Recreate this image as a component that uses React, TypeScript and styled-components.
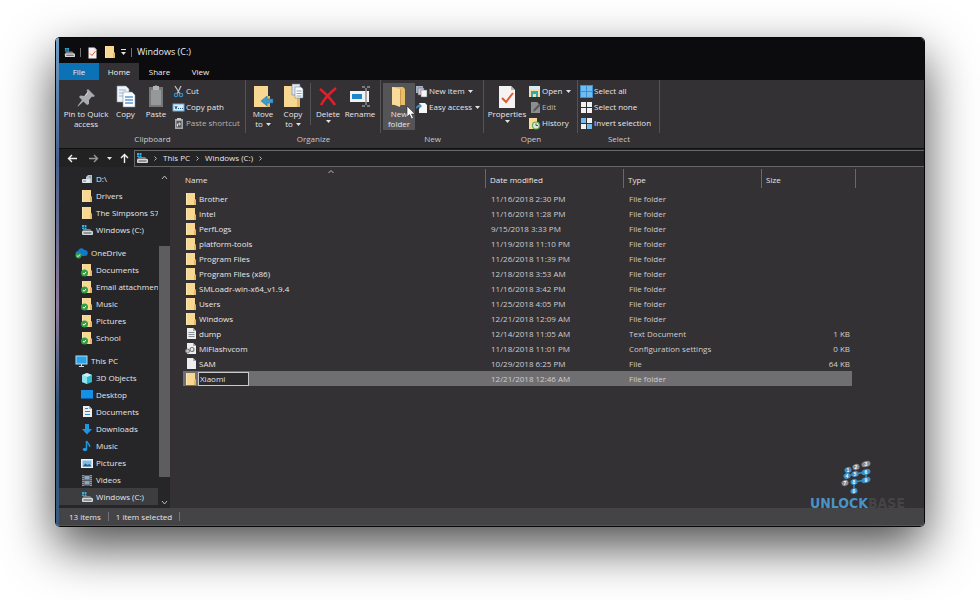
import React from "react";
import styled, { createGlobalStyle } from "styled-components";

const GlobalStyle = createGlobalStyle`
  *, *::before, *::after { box-sizing: border-box; }
  body {
    margin: 0;
    background: #fff;
    font: 8px/10px "Open Sans", "Noto Sans", sans-serif;
    font-weight: 500;
    color: #e8e6e8;
  }
  button, input {
    font: inherit;
    color: inherit;
    background: none;
    border: 0;
    margin: 0;
    padding: 0;
  }
  svg { display: block; flex: none; }
`;

const Page = styled.main`
  min-height: 100vh;
  padding: 37px 55px 73px;
  display: flex;
`;

const Window = styled.section`
  position: relative;
  flex: 1;
  min-width: 0;
  display: flex;
  flex-direction: column;
  background: #333133;
  border: 1px solid #070708;
  border-left: 0;
  border-radius: 5px;
  overflow: hidden;
`;

const Shadow = styled.div`
  flex: 1;
  min-width: 0;
  display: flex;
  border-radius: 5px;
  box-shadow: 0 20px 50px rgba(0, 0, 0, 0.7);
`;

const Frame = styled.div`
  flex: 1;
  display: flex;
  flex-direction: column;
  border-left: 1px solid #070708;
  background: linear-gradient(#6f9fc4, #45608c 25%, #8d7898 55%, #2e5277 75%, #375a7e);
  padding-left: 3px;
  padding-bottom: 1px;
`;

const TitleBar = styled.header`
  height: 25px;
  padding: 3px 5px 0;
  display: flex;
  align-items: center;
  gap: 5px;
  background: #0c0b0d;
`;

const Title = styled.h1`
  margin: 0;
  font-size: 9px;
  font-weight: 400;
  color: #eee;
`;

const Bar = styled.span`
  width: 1px;
  height: 9px;
  background: #737175;
`;

const Tabs = styled.nav`
  display: flex;
  height: 17px;
  background: #0c0b0d;
`;

const Tab = styled.button<{ $kind?: "file" | "active" }>`
  width: ${(p) => (p.$kind ? 40 : 41)}px;
  color: #f0eff0;
  background: ${(p) =>
    p.$kind === "file" ? "#0b72b5" : p.$kind === "active" ? "#333134" : "transparent"};
`;

const Ribbon = styled.div`
  display: flex;
  height: 68px;
  background: #333134;
`;

const Group = styled.section<{ $width: number }>`
  width: ${(p) => p.$width}px;
  display: flex;
  flex-direction: column;
`;

const GroupBody = styled.div`
  display: flex;
  height: 53px;
  padding: 3px 2px 0;
  border-right: 1px solid #555356;
`;

const GroupLabel = styled.h2`
  margin: 0;
  font-size: 8px;
  font-weight: 400;
  line-height: 12px;
  text-align: center;
  color: #cccacc;
`;

const BigButton = styled.button<{ $width: number; $hot?: boolean }>`
  position: relative;
  width: ${(p) => p.$width}px;
  height: 47px;
  display: flex;
  flex-direction: column;
  align-items: center;
  white-space: nowrap;
  background: ${(p) => (p.$hot ? "#555457" : "transparent")};
`;

const Caption = styled.span`
  display: flex;
  align-items: center;
  gap: 3px;
`;

const Stack = styled.div`
  display: flex;
  flex-direction: column;
`;

const SmallButton = styled.button<{ $dim?: boolean }>`
  height: 16px;
  display: flex;
  align-items: center;
  gap: 1px;
  white-space: nowrap;
  color: ${(p) => (p.$dim ? "#b5b3b5" : "inherit")};
`;

const Divider = styled.span`
  width: 1px;
  height: 42px;
  margin: 0 2px;
  background: #555356;
`;

const Pointer = styled.svg`
  position: absolute;
  left: 23px;
  top: 22px;
  z-index: 1;
`;

const AddressRow = styled.div`
  display: flex;
  align-items: center;
  height: 19px;
  border-top: 1px solid #101011;
  background: #232223;
`;

const NavButtons = styled.div`
  width: 75px;
  display: flex;
  align-items: center;
  justify-content: space-between;
  padding: 0 4px 0 8px;
`;

const NavPair = styled.div`
  display: flex;
  gap: 10px;
`;

const Address = styled.div`
  flex: 1;
  height: 17px;
  display: flex;
  align-items: center;
  gap: 4px;
  padding-left: 1px;
  border: solid #656665;
  border-width: 1px 0 1px 1px;
  background: #242325;
`;

const Content = styled.div`
  flex: 1;
  min-height: 0;
  display: flex;
`;

const Sidebar = styled.nav`
  width: 111px;
  display: flex;
  background: #262527;
`;

const Tree = styled.ul`
  flex: 1;
  min-width: 0;
  margin: 0;
  padding: 3px 0 0;
  list-style: none;
`;

const TreeItem = styled.li<{ $root?: boolean }>`
  margin-top: ${(p) => (p.$root ? 6 : 0)}px;
`;

const TreeLink = styled.a<{ $root?: boolean; $selected?: boolean }>`
  display: flex;
  align-items: center;
  gap: 3px;
  height: 17px;
  padding-left: ${(p) => (p.$root ? 16 : 22)}px;
  overflow: hidden;
  white-space: nowrap;
  color: inherit;
  text-decoration: none;
  background: ${(p) => (p.$selected ? "#3d3c3e" : "transparent")};
`;

const ScrollTrack = styled.div`
  width: 12px;
  display: flex;
  flex-direction: column;
  align-items: center;
  padding: 7px 0 2px;
`;

const Thumb = styled.div`
  width: 11px;
  flex: 230 0 0;
  background: #5d5c5e;
`;

const ScrollGap = styled.div<{ $share: number }>`
  flex: ${(p) => p.$share} 0 0;
`;

const FileArea = styled.section`
  flex: 1;
  min-width: 0;
  padding: 2px 68px 0 13px;
  background: #333133;
`;

const Files = styled.table`
  width: 100%;
  table-layout: fixed;
  border-collapse: separate;
  border-spacing: 0;
`;

const Col = styled.col<{ $width?: number }>`
  width: ${(p) => (p.$width ? `${p.$width}px` : "auto")};
`;

const HeadCell = styled.th`
  position: relative;
  height: 19px;
  padding: 2px 4px 0;
  font-weight: inherit;
  text-align: left;
  vertical-align: middle;
  border-right: 1px solid #69676a;
  &:first-child { padding-left: 2px; }
`;

const SortMark = styled.svg`
  position: absolute;
  left: 48%;
  top: 0;
`;

const FirstGap = styled.tr`
  height: 3px;
`;

const FileRow = styled.tr<{ $selected?: boolean }>`
  height: 15px;
  td { background: ${(p) => (p.$selected ? "#6f6e70" : "transparent")}; }
  td:last-child { background: none; }
`;

const Cell = styled.td<{ $right?: boolean; $name?: boolean }>`
  padding: 0 ${(p) => (p.$right ? 2 : 0)}px 0 ${(p) => (p.$name ? 2 : 5)}px;
  text-align: ${(p) => (p.$right ? "right" : "left")};
  white-space: nowrap;
  color: ${(p) => (p.$name ? "#e9e7e9" : "#cfcdd0")};
`;

const NameBox = styled.div`
  display: flex;
  align-items: center;
  gap: 2px;
`;

const RenameInput = styled.input`
  width: 51px;
  height: 14px;
  margin-left: -1px;
  padding: 0 1px;
  border: 1px solid #c9c8ca;
  background: #2b2a2c;
`;

const StatusBar = styled.footer`
  height: 17px;
  display: flex;
  align-items: center;
  gap: 7px;
  padding-left: 10px;
  background: #444345;
`;

const Watermark = styled.div`
  position: absolute;
  right: 19px;
  bottom: 13px;
  display: flex;
  flex-direction: column;
  align-items: center;
  font: bold 14px/19px "DejaVu Sans Condensed", "DejaVu Sans", sans-serif;
`;

const Brand = styled.div`
  color: #454446;
`;

const BrandBlue = styled.span`
  color: #4b93c4;
`;

/* ---- icons ---- */

const Drive = ({ size = 12 }: { size?: number }) => (
  <svg width={size} height={size} viewBox="0 0 12 12">
    <path d="M1 1h2v2H1zM3.500 1h2v2h-2zM1 3.500h2v1.500H1zM3.500 3.500h2v1.500h-2z" fill="#2fb3e6" />
    <path d="M2.500 5h6.500l2.500 2.500H1z" fill="#7c8184" />
    <rect x="1" y="7" width="11" height="4" rx="1" fill="#d3d8da" />
    <path d="M2.500 9h8" stroke="#4a4f52" />
  </svg>
);

const DiskD = () => (
  <svg width="12" height="12" viewBox="0 0 12 12">
    <path d="M5 4l2-2h4v8H5z" fill="#b7c3cc" />
    <rect x="1" y="6" width="8" height="4" rx="1" fill="#e4e8ea" />
    <path d="M8 4h2M2 8h3" stroke="#5b7f9b" />
  </svg>
);

const Folder = ({ synced }: { synced?: boolean }) => (
  <svg width="12" height="14" viewBox="0 0 12 14">
    <path d="M1 1h9v6l1 1v5H1z" fill="#f8d792" />
    <path d="M9 8h2v5H9z" fill="#e7b962" />
    <path d="M1 1h1v12H1z" fill="#fbe6b6" />
    {synced && (
      <>
        <circle cx="3.500" cy="10" r="3.500" fill="#2f9e44" />
        <path d="M2 10l1 1.300 2-2.400" stroke="#fff" fill="none" />
      </>
    )}
  </svg>
);

const BigFolder = ({ kind }: { kind: "move" | "copy" | "new" }) => (
  <svg width="26" height="26" viewBox="0 0 26 26">
    {kind === "new" ? (
      <>
        <path d="M6 4h11l2 2v16H6z" fill="#e9bd69" />
        <path d="M6 4l8 2v18l-8-3z" fill="#f9dc9c" />
        <path d="M14 6l1 1v13l-1 4z" fill="#c99a48" />
      </>
    ) : (
      <>
        <path d="M4 3h14v10l2 2v9H4z" fill="#f8d792" />
        <path d="M17 13h3v11h-3z" fill="#e3b662" />
      </>
    )}
    {kind === "move" && <path d="M11 18l6-5v3h6v4h-6v3z" fill="#3b9bcf" stroke="#1f6f9e" strokeWidth=".5" />}
    {kind === "copy" && (
      <>
        <path d="M12 1h8v11h-8z" fill="#dfe6ec" stroke="#6d8194" strokeWidth=".6" />
        <path d="M15 4h6l2 2v9h-8z" fill="#fff" stroke="#6d8194" strokeWidth=".6" />
        <path d="M16.500 8h5M16.500 10.500h5M16.500 13h5" stroke="#6fa4d3" />
      </>
    )}
  </svg>
);

const Pin = () => (
  <svg width="26" height="26" viewBox="0 0 26 26">
    <path d="M15 6l7 7-2 1-1-.5-3 3.500v4l-2 1-3.500-3.500L5 23.500 4.500 23 9 17 6 14l1.500-1.500 4 .5 3-4-1-1.500z" fill="#a9adb1" />
    <path d="M15 9l-3 4" stroke="#d5d8da" />
  </svg>
);

const CopyIcon = () => (
  <svg width="26" height="26" viewBox="0 0 26 26">
    <path d="M4 3h9l3 3v13H4z" fill="#f1f4f7" stroke="#8b98a5" strokeWidth=".6" />
    <path d="M6 7h7M6 10h4M6 13h4" stroke="#8eb8df" />
    <path d="M10 9h9l3 3v12H10z" fill="#fff" stroke="#7e8d9b" strokeWidth=".6" />
    <path d="M12 14h8M12 17h8M12 20h8" stroke="#5d9bd4" strokeWidth="1.300" />
  </svg>
);

const PasteIcon = () => (
  <svg width="26" height="26" viewBox="0 0 26 26">
    <rect x="6" y="4" width="14" height="20" fill="#77787a" />
    <rect x="8" y="7" width="10" height="15" fill="#97989a" />
    <path d="M10 3h2l1-1 1 1h2v4h-6z" fill="#b2b3b5" />
  </svg>
);

const DeleteIcon = () => (
  <svg width="26" height="26" viewBox="0 0 26 26">
    <path d="M5 6c5 4 11 10 15 16M21 5C15 10 9 16 6 22" stroke="#e01f2d" strokeWidth="2.600" fill="none" />
  </svg>
);

const RenameIcon = () => (
  <svg width="26" height="26" viewBox="0 0 26 26">
    <rect x="3" y="8" width="19" height="11" fill="#f0f2f4" />
    <rect x="5" y="11" width="10" height="5" fill="#1f86cc" />
    <path d="M15 4h3M20 4h3M19 5v17M15 23h3M20 23h3" stroke="#8f9396" strokeWidth="1.500" />
  </svg>
);

const PropertiesIcon = ({ size = 26 }: { size?: number }) => (
  <svg width={size} height={size} viewBox="0 0 26 26">
    <path d="M5 3h12l4 4v18H5z" fill="#f5f3f2" />
    <path d="M17 3v4h4z" fill="#b9b6b5" />
    <path d="M8 15l4 4 7-9" stroke="#dd5a2d" strokeWidth="2" fill="none" />
  </svg>
);

const CutIcon = () => (
  <svg width="13" height="13" viewBox="0 0 13 13">
    <path d="M3 1l5 8M9 1L5 9" stroke="#b9c4cc" strokeWidth="1.300" />
    <circle cx="4" cy="10" r="1.700" fill="none" stroke="#2e8fd0" strokeWidth="1.200" />
    <circle cx="9" cy="10" r="1.700" fill="none" stroke="#2e8fd0" strokeWidth="1.200" />
  </svg>
);

const PathIcon = () => (
  <svg width="13" height="13" viewBox="0 0 13 13">
    <rect x="1" y="3" width="11" height="7" fill="#dcebf6" stroke="#6fa9d4" />
    <path d="M3 5l1 3 1-3M6 7.500h1M8 7.500h1M10 7.500h1" stroke="#285f8c" fill="none" />
  </svg>
);

const ShortcutIcon = () => (
  <svg width="13" height="13" viewBox="0 0 13 13">
    <rect x="3" y="2" width="8" height="10" fill="#a6a7a9" />
    <rect x="5" y="1" width="4" height="2" fill="#c6c7c9" />
    <rect x="4.500" y="4" width="5" height="6.500" fill="#56575a" />
    <path d="M5.500 9.500V7h2.500M7 5.700L8.500 7 7 8.400" stroke="#dedfe0" fill="none" />
  </svg>
);

const NewItemIcon = () => (
  <svg width="13" height="13" viewBox="0 0 13 13">
    <rect x="1" y="1" width="7" height="7" fill="#9fb6c9" />
    <rect x="3" y="3" width="6" height="7" fill="#d7c5cf" stroke="#5b6167" strokeWidth=".5" />
    <rect x="6" y="5" width="6" height="7" fill="#f4f6f8" stroke="#5b6167" strokeWidth=".5" />
  </svg>
);

const EasyIcon = () => (
  <svg width="13" height="13" viewBox="0 0 13 13">
    <path d="M4 2h6l2 2v8H4z" fill="#f4f6f8" />
    <path d="M1 8c0-3 1-4 3-4V2l3 3-3 3V6C3 6 2 7 1 8z" fill="#3b93c8" />
  </svg>
);

const OpenIcon = () => (
  <svg width="13" height="13" viewBox="0 0 13 13">
    <path d="M1 1h11v11H1z" fill="#f3dfa9" />
    <path d="M1 1h11v3H1z" fill="#d8eaf2" />
    <path d="M3 12V6h7v6H8V9H5v3z" fill="#3aa7a9" />
  </svg>
);

const EditIcon = () => (
  <svg width="13" height="13" viewBox="0 0 13 13">
    <path d="M3 1h6l3 3v8H3z" fill="#8c8d8f" />
    <path d="M5 11l1-3 5-5 1.500 1.500-5 5z" fill="#56575a" />
  </svg>
);

const HistoryIcon = () => (
  <svg width="13" height="13" viewBox="0 0 13 13">
    <path d="M1 1h8v11H1z" fill="#f6dc94" />
    <circle cx="8" cy="8.500" r="3.500" fill="#dfe5df" stroke="#5fae57" strokeWidth="1.200" />
    <path d="M8 6.500v2h2" stroke="#37613a" fill="none" />
  </svg>
);

const SelectIcon = ({ mode }: { mode: "all" | "none" | "invert" }) => {
  const blue = "#6fbcf0";
  const white = "#f0f1f2";
  const fills =
    mode === "all" ? [blue, blue, blue, blue] : mode === "none" ? [white, white, white, white] : [blue, white, white, blue];
  return (
    <svg width="13" height="13" viewBox="0 0 13 13">
      {mode === "all" && <rect x="0" y="0" width="13" height="13" fill="#3c8fd0" />}
      {fills.map((fill, i) => (
        <rect
          key={i}
          x={i % 2 ? 7 : 1}
          y={i > 1 ? 7 : 1}
          width="5"
          height="5"
          fill={fill}
        />
      ))}
    </svg>
  );
};

const DownMark = ({ barred }: { barred?: boolean }) => (
  <svg width="5" height={barred ? 6 : 4} viewBox={barred ? "0 -2 5 6" : "0 0 5 4"}>
    {barred && <path d="M0-1.500h5" stroke="#e4e2e4" />}
    <path d="M0 1h5L2.500 4z" fill="#e4e2e4" />
  </svg>
);

const Chevron = ({ dir }: { dir: "up" | "down" | "right" }) => (
  <svg width="7" height="7" viewBox="0 0 7 7">
    <path
      d={dir === "up" ? "M1 5l2.500-3L6 5" : dir === "down" ? "M1 2l2.500 3L6 2" : "M2.500 1.500l2 2-2 2"}
      stroke="#b9b8ba"
      fill="none"
    />
  </svg>
);

const Arrow = ({ dir, dim }: { dir: "left" | "right" | "up"; dim?: boolean }) => (
  <svg width="11" height="11" viewBox="0 0 11 11">
    <path
      d={
        dir === "left"
          ? "M10 5.500H1.500M5 2L1.500 5.500 5 9"
          : dir === "right"
            ? "M1 5.500h8.500M6 2l3.500 3.500L6 9"
            : "M5.500 10V1.500M2 5l3.500-3.500L9 5"
      }
      stroke={dim ? "#98979a" : "#f2f1f3"}
      strokeWidth="1.400"
      fill="none"
    />
  </svg>
);

const OneDrive = () => (
  <svg width="13" height="12" viewBox="0 0 13 12">
    <path d="M3 9a2.500 2.500 0 010-5 3.500 3.500 0 016.500-1A3 3 0 0110 9z" fill="#1279c8" />
    <circle cx="3.500" cy="8.500" r="3" fill="#2f9e44" />
    <path d="M2 8.500l1 1.200 2-2.200" stroke="#fff" fill="none" />
  </svg>
);

const Monitor = () => (
  <svg width="13" height="12" viewBox="0 0 13 12">
    <rect x="1" y="1" width="11" height="8" fill="#2ba3e8" stroke="#b7dcf2" />
    <path d="M4 11.500h5M6.500 9v2" stroke="#d5dbe0" />
  </svg>
);

const Cube = () => (
  <svg width="12" height="12" viewBox="0 0 12 12">
    <path d="M1 3l5-2 5 2v7l-5 2-5-2z" fill="#33b7cf" />
    <path d="M1 3l5 2v7l-5-2z" fill="#8de4ee" />
    <path d="M1 3l5-2 5 2-5 2z" fill="#c8f4f7" />
  </svg>
);

const Desktop = () => (
  <svg width="12" height="12" viewBox="0 0 12 12">
    <rect y="1" width="12" height="9" x="0" fill="#1590e6" />
    <path d="M0 9.500h12" stroke="#0a5fa5" />
  </svg>
);

const Doc = ({ kind }: { kind: "lines" | "blank" | "gear" | "word" }) => (
  <svg width="12" height="13" viewBox="0 0 12 13">
    <path d="M2 1h6l3 3v8H2z" fill="#eceef0" />
    <path d="M8 1v3h3z" fill="#a9abad" />
    {kind === "lines" && <path d="M3.500 5.500h6M3.500 7.500h6M3.500 9.500h6" stroke="#8d9092" />}
    {kind === "word" && <path d="M4 3.500h3M4 6.500h5M4 9.500h5" stroke="#2f86c6" />}
    {kind === "gear" && (
      <>
        <circle cx="7" cy="7.500" r="2" fill="none" stroke="#77797c" strokeWidth="1.200" />
        <circle cx="2.500" cy="9" r="2" fill="#c3c5c7" stroke="#77797c" />
      </>
    )}
  </svg>
);

const Download = () => (
  <svg width="12" height="12" viewBox="0 0 12 12">
    <path d="M4 1h4v5h3l-5 5.500L1 6h3z" fill="#2196e0" />
  </svg>
);

const Note = () => (
  <svg width="12" height="12" viewBox="0 0 12 12">
    <path d="M5.500 1c.5 2.500 4 2.500 3 6" stroke="#2196e0" strokeWidth="1.500" fill="none" />
    <path d="M5.500 1v8" stroke="#2196e0" strokeWidth="1.500" />
    <ellipse cx="4" cy="9.500" rx="2.300" ry="1.800" fill="#2196e0" />
  </svg>
);

const Picture = () => (
  <svg width="12" height="12" viewBox="0 0 12 12">
    <rect x="0" y="2" width="12" height="9" fill="#f0f2f4" />
    <path d="M1.500 3.500h9v6h-9z" fill="#7cbbe6" />
    <path d="M1.500 9.500l3-3 2 1.500 2-1 2 2.500z" fill="#2d5c80" />
  </svg>
);

const Film = () => (
  <svg width="12" height="12" viewBox="0 0 12 12">
    <rect x="1" y="1" width="10" height="11" fill="#55585c" />
    <path d="M2 1v11M10 1v11" stroke="#cdd0d3" strokeDasharray="1 1" />
    <path d="M3.500 2h5v3.500h-5zM3.500 7h5v3.500h-5z" fill="#8aa7be" />
  </svg>
);

const BrandMark = () => {
  const blue = "#3a8dc4";
  const grey = "#8b8a8c";
  const dots: [number, number, string, string][] = [
    [7, 10, "1", blue], [15, 7, "2", grey], [25, 4, "3", grey],
    [6, 16, "4", blue], [14, 14, "5", blue], [25, 12, "6", blue],
    [4, 23, "7", grey], [13, 22, "8", blue], [25, 20, "9", blue],
    [13, 31, "0", blue],
  ];
  return (
    <svg width="32" height="34" viewBox="0 0 32 34">
      <path d="M7 10L6 16l8-2 11-2v8l-12 2v8" stroke={blue} strokeWidth="1.500" fill="none" />
      {dots.map(([x, y, digit, fill]) => (
        <g key={digit}>
          <ellipse cx={x} cy={y} rx={x > 20 ? 4.6 : 3.6} ry="3" fill={fill} transform={`rotate(-18 ${x} ${y})`} />
          <text x={x} y={y + 2} fontSize="5" fontFamily="Liberation Sans" fill="#fff" textAnchor="middle">
            {digit}
          </text>
        </g>
      ))}
    </svg>
  );
};

/* ---- data ---- */

type Node = { label: string; icon: React.ReactNode; root?: boolean; selected?: boolean };

const tree: Node[] = [
  { label: "D:\\", icon: <DiskD /> },
  { label: "Drivers", icon: <Folder /> },
  { label: "The Simpsons S7", icon: <Folder /> },
  { label: "Windows (C:)", icon: <Drive /> },
  { label: "OneDrive", icon: <OneDrive />, root: true },
  { label: "Documents", icon: <Folder synced /> },
  { label: "Email attachments", icon: <Folder synced /> },
  { label: "Music", icon: <Folder synced /> },
  { label: "Pictures", icon: <Folder synced /> },
  { label: "School", icon: <Folder synced /> },
  { label: "This PC", icon: <Monitor />, root: true },
  { label: "3D Objects", icon: <Cube /> },
  { label: "Desktop", icon: <Desktop /> },
  { label: "Documents", icon: <Doc kind="word" /> },
  { label: "Downloads", icon: <Download /> },
  { label: "Music", icon: <Note /> },
  { label: "Pictures", icon: <Picture /> },
  { label: "Videos", icon: <Film /> },
  { label: "Windows (C:)", icon: <Drive />, selected: true },
];

type Entry = { name: string; date: string; type: string; size?: string; icon?: "lines" | "blank" | "gear" };

const files: Entry[] = [
  { name: "Brother", date: "11/16/2018 2:30 PM", type: "File folder" },
  { name: "Intel", date: "11/16/2018 1:28 PM", type: "File folder" },
  { name: "PerfLogs", date: "9/15/2018 3:33 PM", type: "File folder" },
  { name: "platform-tools", date: "11/19/2018 11:10 PM", type: "File folder" },
  { name: "Program Files", date: "11/26/2018 11:39 PM", type: "File folder" },
  { name: "Program Files (x86)", date: "12/18/2018 3:53 AM", type: "File folder" },
  { name: "SMLoadr-win-x64_v1.9.4", date: "11/16/2018 3:42 PM", type: "File folder" },
  { name: "Users", date: "11/25/2018 4:05 PM", type: "File folder" },
  { name: "Windows", date: "12/21/2018 12:09 AM", type: "File folder" },
  { name: "dump", date: "12/14/2018 11:05 AM", type: "Text Document", size: "1 KB", icon: "lines" },
  { name: "MiFlashvcom", date: "11/18/2018 11:01 PM", type: "Configuration settings", size: "0 KB", icon: "gear" },
  { name: "SAM", date: "10/29/2018 6:25 PM", type: "File", size: "64 KB", icon: "blank" },
];

export default function App() {
  return (
    <>
      <GlobalStyle />
      <Page>
        <Shadow>
          <Window>
            <Frame>
              <TitleBar>
                <Drive size={11} />
                <Bar />
                <PropertiesIcon size={13} />
                <Folder />
                <DownMark barred />
                <Bar />
                <Title>Windows (C:)</Title>
              </TitleBar>
              <Tabs>
                <Tab $kind="file">File</Tab>
                <Tab $kind="active">Home</Tab>
                <Tab>Share</Tab>
                <Tab>View</Tab>
              </Tabs>
              <Ribbon>
                <Group $width={187}>
                  <GroupBody>
                    <BigButton $width={50}><Pin /><Caption>Pin to Quick</Caption><Caption>access</Caption></BigButton>
                    <BigButton $width={29}><CopyIcon /><Caption>Copy</Caption></BigButton>
                    <BigButton $width={32}><PasteIcon /><Caption>Paste</Caption></BigButton>
                    <Stack>
                      <SmallButton><CutIcon />Cut</SmallButton>
                      <SmallButton><PathIcon />Copy path</SmallButton>
                      <SmallButton $dim><ShortcutIcon />Paste shortcut</SmallButton>
                    </Stack>
                  </GroupBody>
                  <GroupLabel>Clipboard</GroupLabel>
                </Group>
                <Group $width={135}>
                  <GroupBody>
                    <BigButton $width={30}>
                      <BigFolder kind="move" /><Caption>Move</Caption><Caption>to<DownMark /></Caption>
                    </BigButton>
                    <BigButton $width={30}>
                      <BigFolder kind="copy" /><Caption>Copy</Caption><Caption>to<DownMark /></Caption>
                    </BigButton>
                    <Divider />
                    <BigButton $width={30}>
                      <DeleteIcon /><Caption>Delete</Caption><DownMark />
                    </BigButton>
                    <BigButton $width={34}><RenameIcon /><Caption>Rename</Caption></BigButton>
                  </GroupBody>
                  <GroupLabel>Organize</GroupLabel>
                </Group>
                <Group $width={103}>
                  <GroupBody>
                    <BigButton $width={32} $hot>
                      <BigFolder kind="new" /><Caption>New</Caption><Caption>folder</Caption>
                      <Pointer width="10" height="15" viewBox="0 0 10 15">
                        <path d="M1 1v11l2.500-2.500L5.500 14l2-1-2-4H9z" fill="#fff" stroke="#222" strokeWidth=".6" />
                      </Pointer>
                    </BigButton>
                    <Stack>
                      <SmallButton><NewItemIcon /><Caption>New item<DownMark /></Caption></SmallButton>
                      <SmallButton><EasyIcon /><Caption>Easy access<DownMark /></Caption></SmallButton>
                    </Stack>
                  </GroupBody>
                  <GroupLabel>New</GroupLabel>
                </Group>
                <Group $width={94}>
                  <GroupBody>
                    <BigButton $width={42}>
                      <PropertiesIcon /><Caption>Properties</Caption><DownMark />
                    </BigButton>
                    <Stack>
                      <SmallButton><OpenIcon /><Caption>Open<DownMark /></Caption></SmallButton>
                      <SmallButton $dim><EditIcon />Edit</SmallButton>
                      <SmallButton><HistoryIcon />History</SmallButton>
                    </Stack>
                  </GroupBody>
                  <GroupLabel>Open</GroupLabel>
                </Group>
                <Group $width={82}>
                  <GroupBody>
                    <Stack>
                      <SmallButton><SelectIcon mode="all" />Select all</SmallButton>
                      <SmallButton><SelectIcon mode="none" />Select none</SmallButton>
                      <SmallButton><SelectIcon mode="invert" />Invert selection</SmallButton>
                    </Stack>
                  </GroupBody>
                  <GroupLabel>Select</GroupLabel>
                </Group>
              </Ribbon>
              <AddressRow>
                <NavButtons>
                  <NavPair>
                    <button aria-label="Back"><Arrow dir="left" /></button>
                    <button aria-label="Forward"><Arrow dir="right" dim /></button>
                  </NavPair>
                  <button aria-label="Recent"><DownMark /></button>
                  <button aria-label="Up"><Arrow dir="up" /></button>
                </NavButtons>
                <Address>
                  <Drive />
                  <Chevron dir="right" />
                  <button>This PC</button>
                  <Chevron dir="right" />
                  <button>Windows (C:)</button>
                  <Chevron dir="right" />
                </Address>
              </AddressRow>
              <Content>
                <Sidebar>
                  <Tree>
                    {tree.map((n, i) => (
                      <TreeItem key={i} $root={n.root}>
                        <TreeLink href="#" $root={n.root} $selected={n.selected}>
                          {n.icon}
                          {n.label}
                        </TreeLink>
                      </TreeItem>
                    ))}
                  </Tree>
                  <ScrollTrack>
                    <Chevron dir="up" />
                    <ScrollGap $share={65} />
                    <Thumb />
                    <ScrollGap $share={22} />
                    <Chevron dir="down" />
                  </ScrollTrack>
                </Sidebar>
                <FileArea>
                  <Files>
                    <colgroup>
                      <Col />
                      <Col $width={138} />
                      <Col $width={138} />
                      <Col $width={90} />
                      <Col $width={4} />
                    </colgroup>
                    <thead>
                      <tr>
                        <HeadCell>
                          Name
                          <SortMark width="6" height="5" viewBox="0 0 6 5">
                            <path d="M.5 4L3 1.500 5.500 4" stroke="#b9b8ba" fill="none" />
                          </SortMark>
                        </HeadCell>
                        <HeadCell>Date modified</HeadCell>
                        <HeadCell>Type</HeadCell>
                        <HeadCell colSpan={2}>Size</HeadCell>
                      </tr>
                    </thead>
                    <tbody>
                      <FirstGap />
                      {files.map((f) => (
                        <FileRow key={f.name}>
                          <Cell $name>
                            <NameBox>
                              {f.icon ? <Doc kind={f.icon} /> : <Folder />}
                              {f.name}
                            </NameBox>
                          </Cell>
                          <Cell>{f.date}</Cell>
                          <Cell>{f.type}</Cell>
                          <Cell $right>{f.size}</Cell>
                          <td />
                        </FileRow>
                      ))}
                      <FileRow $selected>
                        <Cell $name>
                          <NameBox>
                            <Folder />
                            <RenameInput aria-label="Folder name" defaultValue="Xiaomi" />
                          </NameBox>
                        </Cell>
                        <Cell>12/21/2018 12:46 AM</Cell>
                        <Cell>File folder</Cell>
                        <Cell $right />
                        <td />
                      </FileRow>
                    </tbody>
                  </Files>
                </FileArea>
              </Content>
              <StatusBar>
                <span>13 items</span>
                <Bar />
                <span>1 item selected</span>
                <Bar />
              </StatusBar>
            </Frame>
            <Watermark>
              <BrandMark />
              <Brand><BrandBlue>UNLOCK</BrandBlue>BASE</Brand>
            </Watermark>
          </Window>
        </Shadow>
      </Page>
    </>
  );
}
